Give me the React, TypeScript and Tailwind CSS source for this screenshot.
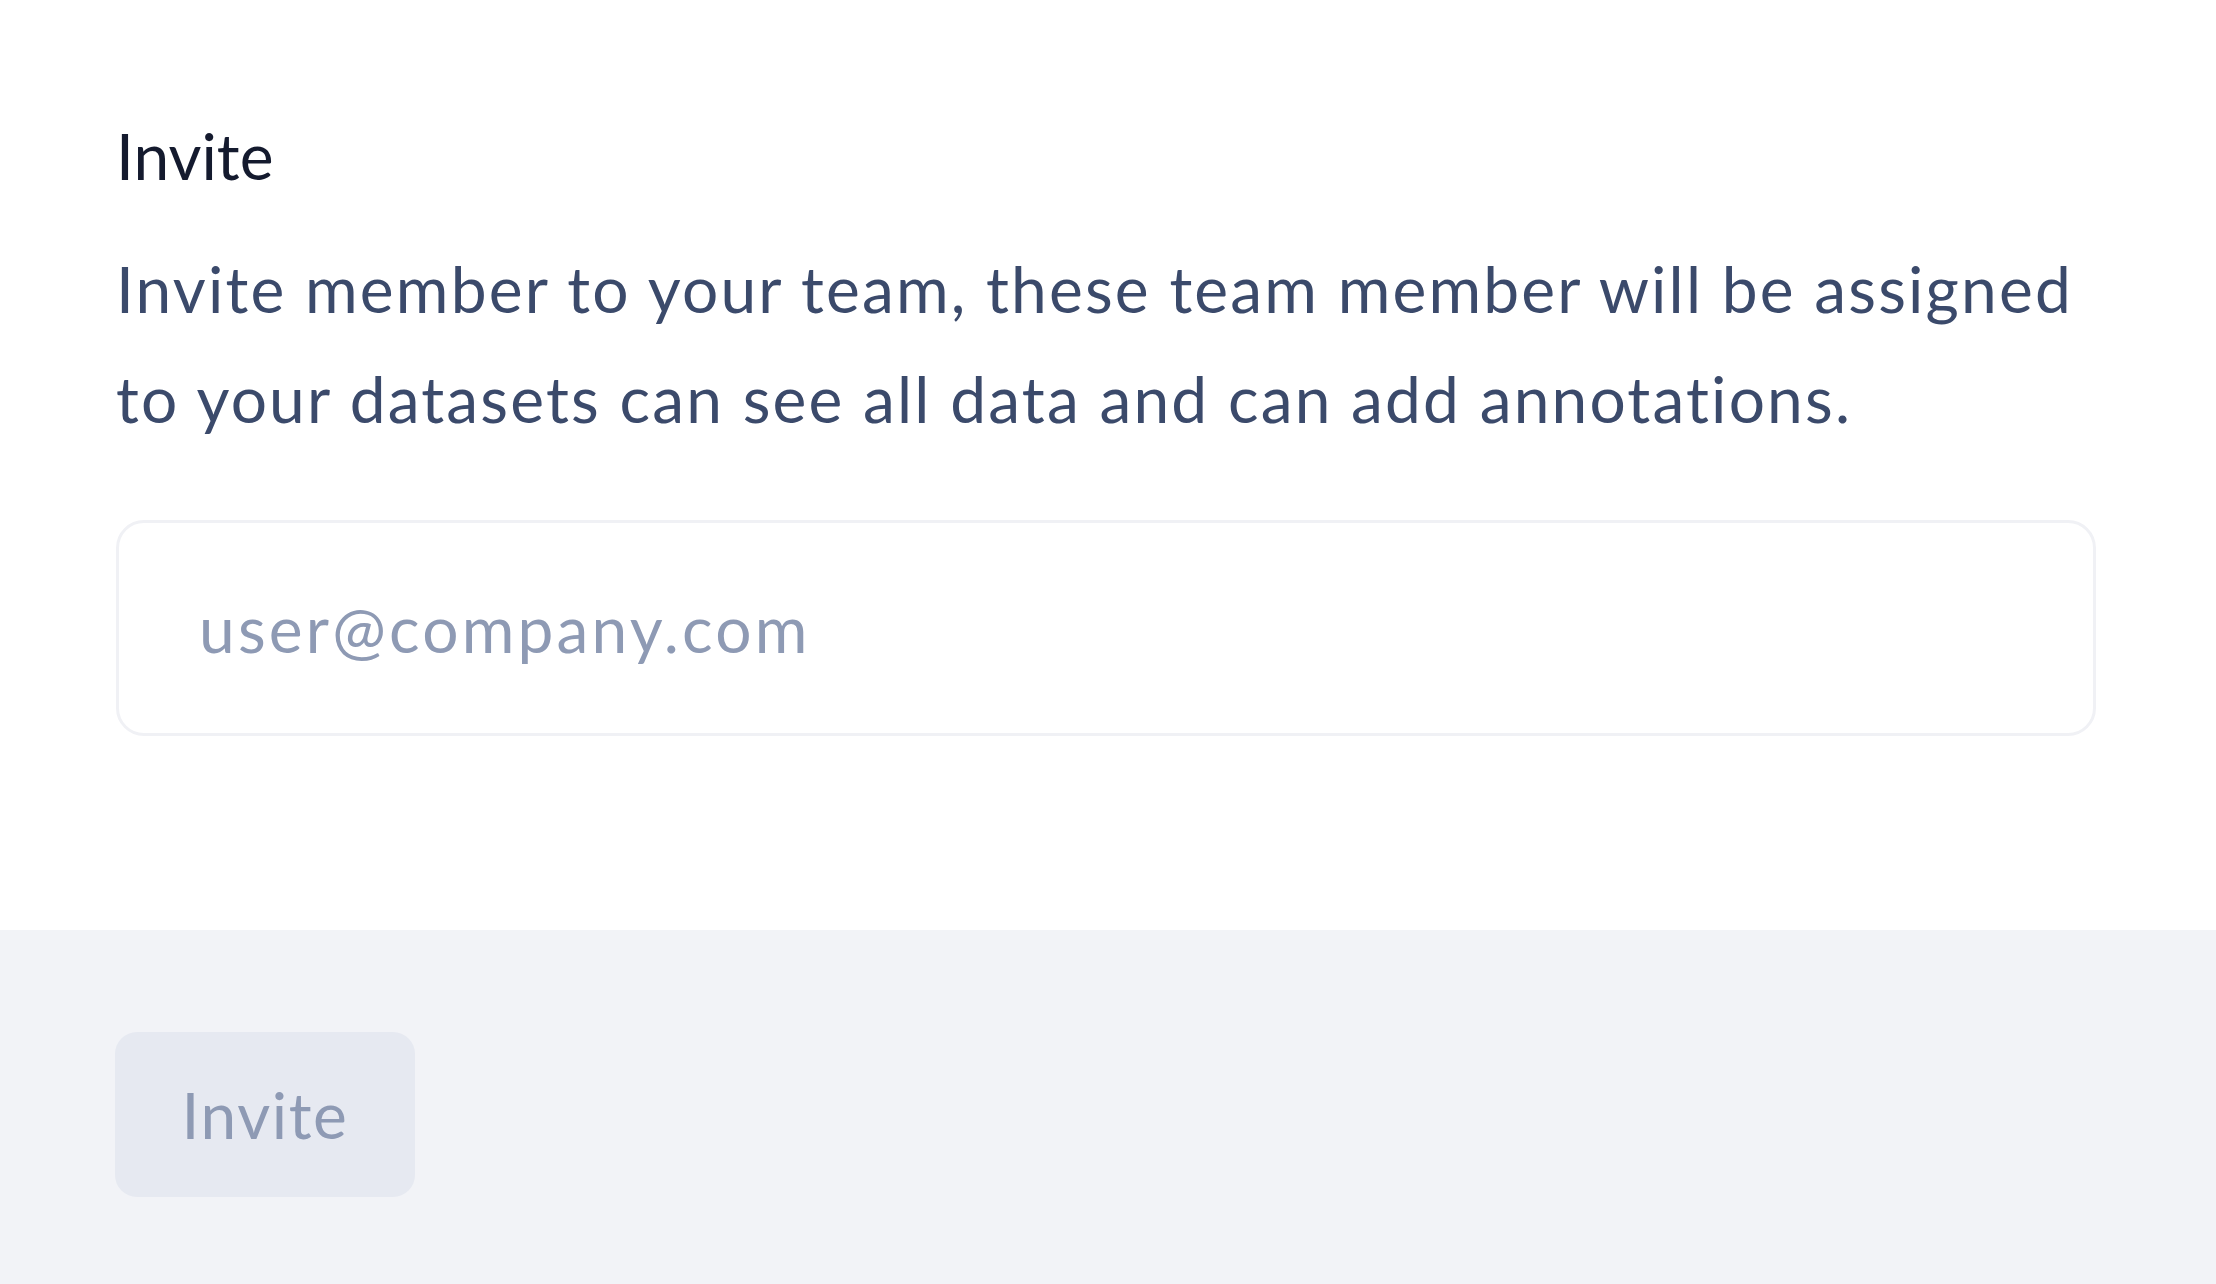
export default function App() {
  return (
    <div className="flex h-[1284px] w-full flex-col bg-white font-['Lato',_'Liberation_Sans',_sans-serif]">
      <div className="flex h-[930px] shrink-0 flex-col pl-[116px] pr-[120px] pt-[116px]">
        <h2 className="text-[64px] leading-[80px] font-normal text-[#141a2e]">Invite</h2>
        <p className="mt-[38px] mr-[-24px] text-[64px] leading-[110px] tracking-[0.034em] text-[#3b4a6b]">
          Invite member to your team, these team member will be assigned to your datasets can see all data and can add annotations.
        </p>
        <input
          type="email"
          placeholder="user@company.com"
          className="mt-[66px] h-[216px] w-full rounded-[28px] border-[3px] border-[#f0f1f5] bg-white px-[80px] text-[64px] tracking-[0.05em] text-[#3b4a6b] outline-none placeholder:text-[#8e9ab4]"
        />
      </div>
      <div className="flex flex-1 items-start bg-[#f2f3f7] pl-[115px] pt-[102px]">
        <button
          disabled
          className="flex h-[165px] w-[300px] items-center justify-center rounded-[22px] bg-[#e6e9f1] text-[64px] tracking-[0.025em] text-[#8e9ab4]"
        >
          Invite
        </button>
      </div>
    </div>
  );
}
